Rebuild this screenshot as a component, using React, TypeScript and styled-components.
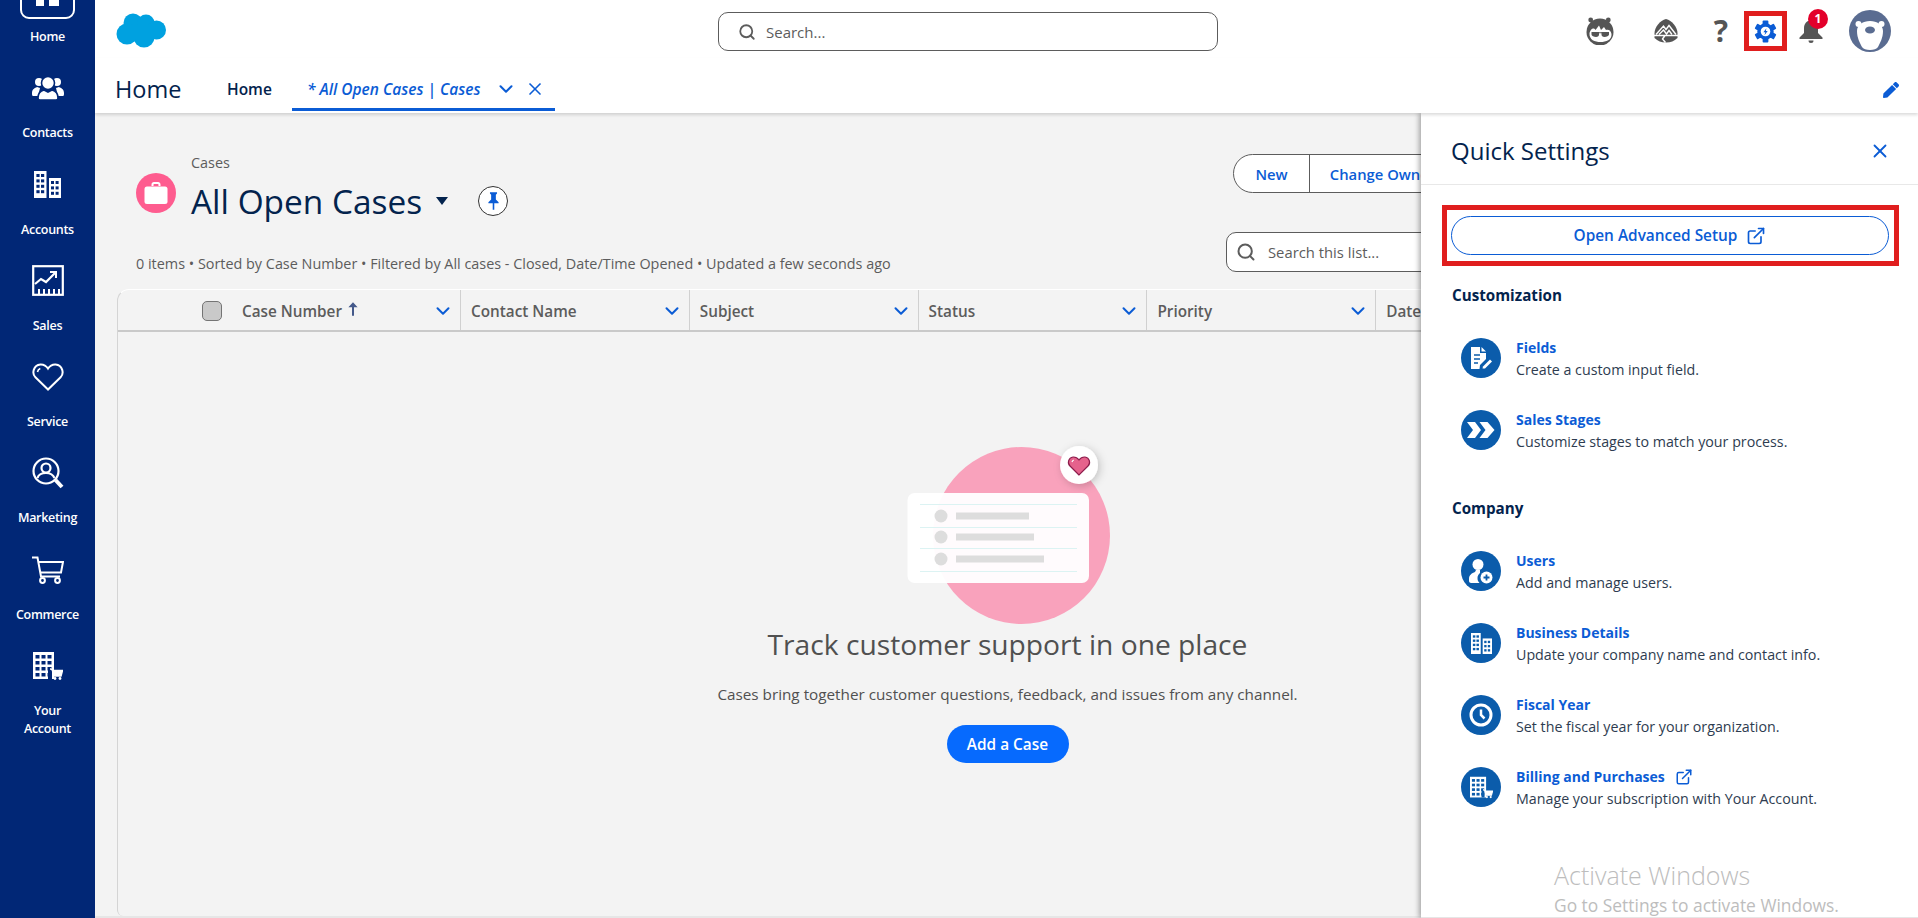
import * as React from 'react';
import styled, { createGlobalStyle } from 'styled-components';
import { ChevronDown, ExternalLink, Search, X } from 'lucide-react';
import { FaPen } from 'react-icons/fa';

const NAVY = '#012776';
const BLUE = '#0b5cd5';
const INK = '#03234d';
const CIRCLE = '#0b5cab';

const GlobalStyle = createGlobalStyle`
    html, body {
        margin: 0;
        padding: 0;
        height: 100%;
        overflow: hidden;
        background: #f3f3f3;
        font-family: "Open Sans", "Noto Sans", "Liberation Sans", sans-serif;
    }
    * {
        box-sizing: border-box;
    }
`;

const Page = styled.div`
    display: flex;
    width: 1918px;
    height: 918px;
    overflow: hidden;
`;

const Sidebar = styled.nav`
    flex: 0 0 95px;
    background: ${NAVY};
    overflow: hidden;
`;

const NavItem = styled.div<{ $first?: boolean }>`
    height: 96.25px;
    margin-top: ${(p) => (p.$first ? '-32px' : '0')};
    padding-top: 6px;
    display: flex;
    flex-direction: column;
    align-items: center;
    color: #fff;
`;

const NavIcon = styled.div`
    height: 36px;
    display: flex;
    align-items: center;
    justify-content: center;
`;

const HomeBox = styled.div`
    width: 55px;
    height: 54px;
    flex: none;
    border: 2px solid #fff;
    border-radius: 9px;
    display: flex;
    align-items: flex-end;
    justify-content: center;
    padding-bottom: 11px;
    gap: 5px;
`;

const HomeLeg = styled.span<{ $w: number }>`
    width: ${(p) => p.$w}px;
    height: 22px;
    background: #fff;
`;

const NavLabel = styled.div`
    margin-top: 18px;
    font-size: 12.5px;
    font-weight: 600;
    line-height: 18px;
    letter-spacing: -0.3px;
    text-align: center;
`;

const Main = styled.div`
    flex: 1;
    min-width: 0;
    display: flex;
    flex-direction: column;
    position: relative;
`;

const TopBar = styled.header`
    height: 58px;
    flex: none;
    background: #fff;
    display: flex;
    align-items: flex-start;
    padding-left: 21px;
`;

const Logo = styled.svg`
    width: 50px;
    height: 35px;
    margin-top: 13px;
    flex: none;
`;

const GlobalSearch = styled.div`
    width: 500px;
    height: 39px;
    margin: 12px 0 0 552px;
    border: 1px solid #5c5c5c;
    border-radius: 10px;
    background: #fff;
    display: flex;
    align-items: center;
    gap: 10px;
    padding: 1px 0 0 19px;
    color: #5c5c5c;
    font-size: 15px;
`;

const HeaderIcons = styled.div`
    margin-left: auto;
    padding-right: 13px;
    display: flex;
    height: 62px;
`;

const IconSlot = styled.div<{ $w: number; $mark?: boolean }>`
    width: ${(p) => p.$w}px;
    height: ${(p) => (p.$mark ? '40px' : '62px')};
    margin: ${(p) => (p.$mark ? '11px 0 0 4px' : '0')};
    border: ${(p) => (p.$mark ? '5px solid #e01e1e' : '0')};
    display: flex;
    align-items: center;
    justify-content: center;
    position: relative;
`;

const HelpMark = styled.span`
    font-family: "Open Sans", sans-serif;
    font-size: 30px;
    font-weight: 700;
    line-height: 1;
    color: #555;
`;

const Badge = styled.span`
    position: absolute;
    left: 21px;
    top: 9px;
    width: 20px;
    height: 20px;
    border-radius: 50%;
    background: #e3002b;
    color: #fff;
    font-size: 12px;
    font-weight: 700;
    line-height: 20px;
    text-align: center;
`;

const TabBar = styled.div`
    height: 55px;
    flex: none;
    background: #fff;
    display: flex;
    align-items: stretch;
    padding-left: 20px;
    box-shadow: 0 2px 3px rgba(0, 0, 0, 0.14);
    position: relative;
    z-index: 2;
`;

const AppName = styled.div`
    align-self: center;
    width: 112px;
    margin-top: 7px;
    font-size: 23.5px;
    color: ${INK};
    line-height: 32px;
`;

const PlainTab = styled.div`
    align-self: center;
    margin-top: 7px;
    width: 65px;
    font-size: 15.5px;
    font-weight: 600;
    color: ${INK};
`;

const ActiveTab = styled.div`
    width: 263px;
    height: 53px;
    border-bottom: 3px solid ${BLUE};
    display: flex;
    align-items: center;
    padding: 12px 0 0 15px;
    color: ${BLUE};
    font-size: 15.5px;
    font-weight: 600;
    font-style: italic;
    white-space: nowrap;
`;

const TabText = styled.span`
    width: 176px;
`;

const TabCaret = styled(ChevronDown)`
    width: 22px;
    height: 22px;
    margin-left: 12px;
    flex: none;
    stroke-width: 2.2;
`;

const TabClose = styled(X)`
    width: 20px;
    height: 20px;
    margin-left: 8px;
    flex: none;
    stroke-width: 2;
`;

const EditPen = styled(FaPen)`
    margin: 24px 19px 0 auto;
    width: 16px;
    height: 16px;
    color: ${BLUE};
`;

const Content = styled.main`
    flex: 1;
    min-height: 0;
    display: flex;
    flex-direction: column;
    background: #f3f3f3;
    border-bottom: 2px solid #e6e6e6;
`;

const ListHeader = styled.section`
    height: 176px;
    flex: none;
    display: grid;
    grid-template-columns: 1090px auto;
    padding-left: 41px;
`;

const ListInfo = styled.div`
    padding-top: 40px;
`;

const TitleBlock = styled.div`
    display: flex;
    gap: 15px;
`;

const CaseBadge = styled.div`
    width: 40px;
    height: 40px;
    margin-top: 20px;
    border-radius: 50%;
    background: #fe5c8f;
    display: flex;
    align-items: center;
    justify-content: center;
`;

const ObjectName = styled.div`
    font-size: 14.4px;
    line-height: 20px;
    color: #5c5c5c;
`;

const TitleRow = styled.div`
    margin-top: 6px;
    height: 44px;
    display: flex;
    align-items: center;
`;

const ListTitle = styled.h1`
    margin: 0;
    font-size: 33.4px;
    font-weight: 400;
    line-height: 44px;
    color: ${INK};
`;

const Caret = styled.span`
    margin-left: 14px;
    width: 0;
    height: 0;
    border-left: 6.5px solid transparent;
    border-right: 6.5px solid transparent;
    border-top: 8px solid ${INK};
`;

const PinButton = styled.div`
    margin-left: 30px;
    width: 30px;
    height: 30px;
    border: 1px solid #333;
    border-radius: 50%;
    background: #fff;
    display: flex;
    align-items: center;
    justify-content: center;
`;

const ListMeta = styled.div`
    margin-top: 31px;
    font-size: 14.4px;
    line-height: 20px;
    color: #5c5c5c;
    white-space: nowrap;
`;

const ListTools = styled.div`
    padding-top: 41px;
    white-space: nowrap;
`;

const ButtonGroup = styled.div`
    display: inline-flex;
    margin-left: 7px;
    height: 39px;
    background: #fff;
    border: 1px solid #5c5c5c;
    border-radius: 20px;
    color: ${BLUE};
    font-size: 14.8px;
    font-weight: 600;
    align-items: center;
`;

const GroupButton = styled.div<{ $w: number; $divided?: boolean }>`
    width: ${(p) => p.$w}px;
    height: 100%;
    display: flex;
    align-items: center;
    justify-content: center;
    border-left: ${(p) => (p.$divided ? '1px solid #5c5c5c' : '0')};
`;

const ListSearch = styled.div`
    margin-top: 39px;
    width: 300px;
    height: 40px;
    border: 1px solid #5c5c5c;
    border-radius: 10px;
    background: #fff;
    display: flex;
    align-items: center;
    gap: 12px;
    padding-left: 9px;
    color: #5c5c5c;
    font-size: 14.8px;
`;

const Table = styled.section`
    flex: 1;
    min-height: 0;
    margin: 0 21px 0 22px;
    display: flex;
    flex-direction: column;
    border-left: 1px solid #d4d4d4;
    border-top: 1px solid #fff;
    border-top-left-radius: 12px;
    border-bottom-left-radius: 6px;
`;

const HeaderRow = styled.div`
    height: 42px;
    flex: none;
    display: flex;
    border-bottom: 2px solid #c9c9c9;
`;

const Column = styled.div<{ $w: number }>`
    width: ${(p) => p.$w}px;
    flex: none;
    display: flex;
    align-items: center;
    padding: 1px 6px 0 10px;
    border-left: 1px solid #d0d0d0;
    color: #5c5c5c;
    font-size: 15.3px;
    font-weight: 600;
    white-space: nowrap;
`;

const FirstColumn = styled.div`
    width: 342px;
    flex: none;
    display: flex;
    align-items: center;
    padding: 1px 6px 0 84px;
    color: #5c5c5c;
    font-size: 15.3px;
    font-weight: 600;
`;

const CheckBox = styled.span`
    width: 20px;
    height: 20px;
    margin-right: 20px;
    border: 1px solid #747474;
    border-radius: 5px;
    background: #c9c9c9;
`;

const SortArrow = styled.svg`
    margin: -4px 0 0 6px;
`;

const ColumnCaret = styled(ChevronDown)`
    margin-left: auto;
    width: 22px;
    height: 22px;
    flex: none;
    color: ${BLUE};
    stroke-width: 2.2;
`;

const EmptyState = styled.div`
    flex: 1;
    display: flex;
    flex-direction: column;
    align-items: center;
    padding-top: 114px;
`;

const EmptyArt = styled.svg`
    width: 204px;
    height: 178px;
    overflow: visible;
`;

const EmptyTitle = styled.h2`
    margin: 2px 0 0;
    font-size: 28.2px;
    font-weight: 400;
    line-height: 36px;
    color: #505050;
`;

const EmptyText = styled.p`
    margin: 22px 0 0;
    font-size: 15.27px;
    line-height: 20px;
    color: #505050;
`;

const PrimaryButton = styled.div`
    margin-top: 21px;
    width: 122px;
    height: 38px;
    border-radius: 19px;
    background: #066afe;
    color: #fff;
    font-size: 15.4px;
    font-weight: 600;
    display: flex;
    align-items: center;
    justify-content: center;
`;

const SettingsPanel = styled.aside`
    position: absolute;
    left: 1326px;
    right: 0;
    top: 113px;
    bottom: 0;
    background: #fff;
    box-shadow: -2px 0 5px rgba(0, 0, 0, 0.32);
    border-bottom: 1px solid #e6e6e6;
    z-index: 1;
`;

const PanelHeader = styled.div`
    height: 72px;
    border-bottom: 1px solid #e8e8e8;
    display: flex;
    align-items: center;
    justify-content: space-between;
    padding: 4px 27px 0 30px;
    color: ${INK};
`;

const PanelTitle = styled.h2`
    margin: 0;
    font-size: 24px;
    font-weight: 400;
`;

const PanelClose = styled(X)`
    width: 22px;
    height: 22px;
    color: ${BLUE};
`;

const SetupHighlight = styled.div`
    margin: 20px 19px 0 21px;
    border: 5px solid #e01e1e;
    padding: 6px 5px 6px 4px;
`;

const SetupButton = styled.div`
    height: 39px;
    border: 1px solid ${BLUE};
    border-radius: 20px;
    color: ${BLUE};
    font-size: 15.4px;
    font-weight: 600;
    display: flex;
    align-items: center;
    justify-content: center;
    gap: 9px;
`;

const SectionTitle = styled.h3<{ $top: number }>`
    margin: ${(p) => p.$top}px 0 0 31px;
    font-size: 15.2px;
    font-weight: 700;
    line-height: 20px;
    color: ${INK};
`;

const SettingList = styled.div`
    margin: 33px 0 0 40px;
    display: flex;
    flex-direction: column;
    gap: 32px;
`;

const SettingRow = styled.div`
    display: flex;
    gap: 15px;
    height: 40px;
`;

const SettingIcon = styled.div`
    width: 40px;
    height: 40px;
    flex: none;
    border-radius: 50%;
    background: ${CIRCLE};
    display: flex;
    align-items: center;
    justify-content: center;
`;

const SettingName = styled.div`
    display: flex;
    align-items: center;
    gap: 10px;
    font-size: 14px;
    font-weight: 700;
    line-height: 20px;
    color: ${BLUE};
`;

const SettingText = styled.div`
    margin-top: 2px;
    font-size: 14.25px;
    line-height: 20px;
    color: #2e3c50;
    white-space: nowrap;
`;

const Watermark = styled.div`
    position: absolute;
    left: 133px;
    top: 745px;
    color: #bdbdbd;
    white-space: nowrap;
    font-family: "Open Sans", sans-serif;
`;

const WatermarkTitle = styled.div`
    font-size: 25px;
    font-weight: 300;
    line-height: 34px;
`;

const WatermarkText = styled.div`
    font-size: 17.4px;
    line-height: 26px;
`;

function ContactsIcon() {
    return (
        <svg width="32" height="24" viewBox="0 0 32 24" fill="#fff">
            <circle cx="7" cy="6" r="4" />
            <circle cx="25" cy="6" r="4" />
            <path d="M0 17c0-4 3-5 5-6l3 1-2 8H1c-1 0-1-2-1-3zM32 17c0-4-3-5-5-6l-3 1 2 8h5c1 0 1-2 1-3z" />
            <circle cx="16" cy="7" r="6.5" stroke={NAVY} strokeWidth="1.6" />
            <path d="M6 22c0-5 2-7 6-8l4 2 4-2c4 1 6 3 6 8 0 1-1 2-2 2H8c-1 0-2-1-2-2z" stroke={NAVY} strokeWidth="1.6" />
        </svg>
    );
}

function Buildings({ size, back }: { size: number; back: string }) {
    const rows = [0, 1, 2, 3];
    return (
        <svg width={size} height={size} viewBox="0 0 27 27">
            <rect x="0" y="0" width="12.5" height="27" fill="#fff" />
            <rect x="15" y="7" width="12" height="20" fill="#fff" />
            {rows.map((r) => (
                <g key={r} fill={back}>
                    <rect x="2.4" y={3 + r * 5.4} width="3.2" height="3" />
                    <rect x="7" y={3 + r * 5.4} width="3.2" height="3" />
                </g>
            ))}
            {[0, 1, 2].map((r) => (
                <g key={r} fill={back}>
                    <rect x="17" y={10 + r * 5.4} width="3" height="3" />
                    <rect x="21.6" y={10 + r * 5.4} width="3" height="3" />
                </g>
            ))}
        </svg>
    );
}

function SalesIcon() {
    return (
        <svg width="32" height="31" viewBox="0 0 32 31" fill="none" stroke="#fff">
            <rect x="1.2" y="1.2" width="29.6" height="28.6" strokeWidth="2.2" />
            <path d="M3 19l6-5 5 3 9-9" strokeWidth="2.2" />
            <path d="M18 7h6v6" strokeWidth="2" />
            <path d="M7 29v-5M12 29v-5M17 29v-5M22 29v-5M27 29v-5" strokeWidth="2" />
        </svg>
    );
}

function HeartIcon() {
    return (
        <svg width="32" height="28" viewBox="0 0 32 28" fill="none" stroke="#fff" strokeWidth="2">
            <path d="M16 26.5 3.4 14.2C-.4 10.4 1.4 2 8.4 1.4c3.4-.2 6 1.6 7.6 4.2C17.6 3 20.2 1.2 23.6 1.4c7 .6 8.8 9 5 12.8z" />
            <path d="M5.5 9c.3-1.7 1.2-2.8 2.8-3.4" strokeWidth="1.6" />
        </svg>
    );
}

function MarketingIcon() {
    return (
        <svg width="32" height="32" viewBox="0 0 32 32" fill="none" stroke="#fff" strokeWidth="2.2">
            <circle cx="14" cy="14" r="12.5" />
            <circle cx="14" cy="11" r="4.5" />
            <path d="M5.5 21c1-3.5 4-5 8.5-5s7 1.5 8.5 5" />
            <path d="m23.5 23 6.5 7" strokeWidth="4" />
        </svg>
    );
}

function CartIcon() {
    return (
        <svg width="32" height="28" viewBox="0 0 32 28" fill="none" stroke="#fff" strokeWidth="2">
            <path d="M0 1.5h5.5l3.5 19h19" />
            <path d="M7 6h24l-2 10.5H9" />
            <circle cx="10.5" cy="24.5" r="2.4" />
            <circle cx="25.5" cy="24.5" r="2.4" />
        </svg>
    );
}

function BuildingCart({ size, back }: { size: number; back: string }) {
    const cols = [0, 1, 2];
    const rows = [0, 1, 2, 3];
    return (
        <svg width={size} height={size} viewBox="0 0 30 28">
            <rect x="0" y="0" width="21" height="27" fill="#fff" />
            {rows.map((r) =>
                cols.map((c) => <rect key={`${r}${c}`} x={2.5 + c * 6} y={3 + r * 6} width="4" height="3.5" fill={back} />),
            )}
            <path d="M15 16h4v11h-4z" fill={back} />
            <path d="M17 17h2l2 7h7l1.5-5.5H19" stroke="#fff" strokeWidth="1.5" fill="#fff" />
            <circle cx="22" cy="26.5" r="1.4" fill="#fff" />
            <circle cx="27" cy="26.5" r="1.4" fill="#fff" />
        </svg>
    );
}

function GoggleFace() {
    return (
        <svg width="29" height="28" viewBox="0 0 29 28">
            <circle cx="4.7" cy="3" r="2.4" fill="#555" />
            <circle cx="22.3" cy="3" r="2.4" fill="#555" />
            <circle cx="14" cy="15" r="13.5" fill="#555" />
            <path d="M3.5 16C4.500 12 7.500 10 9.500 13L13 8.500 15 13l3-3 2 3c2-1 5 0 5.500 4 .5 6-5.500 8-11 8S3 23 3.500 16z" fill="#fff" />
            <path d="M5.500 15h7.500v2.500c0 1.500-1 2.500-3 2.500s-4.500-1-4.500-2.500zM15.500 15h7.500v2.500c0 1.500-2.500 2.500-4.500 2.500s-3-1-3-2.500zM13 15.200h3v1h-3z" fill="#555" />
        </svg>
    );
}

function PeakIcon() {
    return (
        <svg width="24" height="24" viewBox="0 0 24 24">
            <path d="M12 0c6 1.500 11.500 8 11.500 14.500v4.500C20 22 17 23.500 12 23.500S4 22 .5 19v-4.500C.5 8 6 1.500 12 0z" fill="#555" />
            <path d="M2 15.500 9.500 7l2.500 3.500L15 6.500l7 9M5 15.500l4.500-4.500 3 4 2.500-3.500 3 4" fill="none" stroke="#fff" strokeWidth="1.4" />
            <path d="M0 16.500h24M11 16.500 8.500 20l3 3.500" fill="none" stroke="#fff" strokeWidth="1.4" />
        </svg>
    );
}

function GearIcon() {
    const teeth = [0, 60, 120, 180, 240, 300];
    return (
        <svg width="23" height="23" viewBox="0 0 24 24">
            {teeth.map((a) => (
                <rect key={a} x="9" y="0.5" width="6" height="6" rx="1" fill={BLUE} transform={`rotate(${a} 12 12)`} />
            ))}
            <circle cx="12" cy="12" r="8.5" fill={BLUE} />
            <circle cx="12" cy="12" r="5" fill="#fff" />
            <path d="M13 8.500 9.800 12.800h2l-.9 3 3.400-4.400h-2z" fill={BLUE} />
        </svg>
    );
}

function BellIcon() {
    return (
        <svg width="24" height="24" viewBox="0 0 24 24" fill="#555">
            <path d="M12 1.500c-4.500 0-7 3.500-7 8v4.500L.5 18.500v1.500h23v-1.500L19 14V9.500c0-4.500-2.500-8-7-8z" />
            <path d="M9.500 21.500a2.500 2.500 0 0 0 5 0z" />
        </svg>
    );
}

function BearAvatar() {
    return (
        <svg width="42" height="42" viewBox="0 0 42 42">
            <circle cx="21" cy="21" r="21" fill="#5a6c91" />
            <g fill="#fff">
                <circle cx="9.5" cy="14" r="3" />
                <circle cx="32.5" cy="14" r="3" />
                <path d="M21 11c7 0 13 4 13 10 0 7-3 12-5 16-2 4-14 4-16 0-2-4-5-9-5-16 0-6 6-10 13-10z" />
            </g>
            <ellipse cx="21" cy="20" rx="5" ry="3.5" fill="#5a6c91" />
        </svg>
    );
}

function CloudLogo() {
    return (
        <Logo viewBox="0 0 50 35" fill="#00a1e0">
            <circle cx="17" cy="10" r="9.5" />
            <circle cx="30" cy="10" r="8.5" />
            <circle cx="40.5" cy="17" r="9.5" />
            <circle cx="28" cy="24" r="10.5" />
            <circle cx="11" cy="21" r="10.5" />
            <rect x="12" y="12" width="25" height="14" />
        </Logo>
    );
}

function BriefcaseIcon() {
    return (
        <svg width="24" height="24" viewBox="0 0 24 24" fill="#fff">
            <rect x="0.5" y="5.5" width="23" height="17.5" rx="2.5" />
            <path d="M7.500 5V3.500C7.500 2 8.500 1 10 1h4c1.500 0 2.500 1 2.500 2.500V5h-2V3.500c0-.4-.2-.6-.6-.6h-3.800c-.4 0-.6.2-.6.6V5z" />
        </svg>
    );
}

function PinIcon() {
    return (
        <svg width="11" height="18" viewBox="0 0 14 22" fill={BLUE}>
            <path d="M2.500 0h9v1.500L10 3v6l3.500 3.500V14H8v8H6v-8H.5v-1.500L4 9V3L2.500 1.500z" />
        </svg>
    );
}

function EmptyIllustration() {
    const rows = [
        { y: 70, w: 73 },
        { y: 91, w: 78 },
        { y: 113, w: 88 },
    ];
    return (
        <EmptyArt viewBox="0 0 204 178">
            <defs>
                <filter id="badge-shadow" x="-40%" y="-40%" width="180%" height="180%">
                    <feDropShadow dx="2" dy="2" stdDeviation="4" floodColor="#000" floodOpacity="0.2" />
                </filter>
            </defs>
            <circle cx="115.5" cy="89.5" r="88.5" fill="#f9a2bc" />
            <rect x="1.5" y="47" width="181.5" height="90" rx="7" fill="#fff" fillOpacity="0.96" />
            {[58, 81, 102, 125].map((y) => (
                <rect key={y} x="14" y={y} width="157" height="1" fill="#dcf3f3" />
            ))}
            {rows.map((r) => (
                <g key={r.y} fill="#dddddd">
                    <circle cx="35" cy={r.y} r="6.5" />
                    <rect x="50" y={r.y - 3.5} width={r.w} height="7" />
                </g>
            ))}
            <circle cx="173" cy="19" r="19" fill="#fff" filter="url(#badge-shadow)" />
            <path d="M173 29 164 20c-3-3-1.500-8.500 3-9 2.500-.2 4.500 1 6 3 1.500-2 3.500-3.200 6-3 4.500.5 6 6 3 9z" fill="#e5628c" stroke="#8d1d4c" strokeWidth="1.2" />
            <path d="M166 16c.3-1 .8-1.600 1.800-2" fill="none" stroke="#fff" strokeWidth="1.2" />
        </EmptyArt>
    );
}

function DocEditIcon() {
    return (
        <svg width="24" height="24" viewBox="0 0 24 24" fill="#fff">
            <path d="M2 1h9v6h6v6l-6 6-.5 4H2z" />
            <path d="M12.500 1 17 5.500h-4.500z" />
            <path d="M5 9h6M5 13h6M5 17h4" stroke={CIRCLE} strokeWidth="1.6" />
            <path d="M14 20.500 21 13.500l2 2-7 7h-2.500z" />
        </svg>
    );
}

function StagesIcon() {
    return (
        <svg width="28" height="20" viewBox="0 0 28 20" fill="#fff">
            <path d="M0 2h8l6 8-6 8H0l6-8z" />
            <path d="M12.500 2h8l7 8-7 8h-8l6-8z" />
        </svg>
    );
}

function UserPlusIcon() {
    return (
        <svg width="24" height="26" viewBox="0 0 24 26">
            <circle cx="9" cy="6.5" r="5.5" fill="#fff" />
            <path d="M0 21c0-4 3-6 6-7l1-2h4v3c-1.500 1-2.500 3-2.500 5s.5 3.500 2 5H2c-1 0-2-1-2-2z" fill="#fff" />
            <circle cx="17.5" cy="19.5" r="6" fill="#fff" />
            <path d="M14.500 19.500h6M17.500 16.500v6" stroke={CIRCLE} strokeWidth="1.8" />
        </svg>
    );
}

function ClockIcon() {
    return (
        <svg width="24" height="24" viewBox="0 0 24 24" fill="none" stroke="#fff">
            <circle cx="12" cy="12" r="10" strokeWidth="3" />
            <path d="M12 6.500V12l3.500 3.500" strokeWidth="2.5" />
        </svg>
    );
}

const columns = ['Contact Name', 'Subject', 'Status', 'Priority', 'Date/Time Opened'];

const customization = [
    { name: 'Fields', text: 'Create a custom input field.', icon: <DocEditIcon /> },
    { name: 'Sales Stages', text: 'Customize stages to match your process.', icon: <StagesIcon /> },
];

const company = [
    { name: 'Users', text: 'Add and manage users.', icon: <UserPlusIcon /> },
    { name: 'Business Details', text: 'Update your company name and contact info.', icon: <Buildings size={21} back={CIRCLE} /> },
    { name: 'Fiscal Year', text: 'Set the fiscal year for your organization.', icon: <ClockIcon /> },
    { name: 'Billing and Purchases', text: 'Manage your subscription with Your Account.', icon: <BuildingCart size={23} back={CIRCLE} />, external: true },
];

function Setting(props: { name: string; text: string; icon: React.ReactNode; external?: boolean }) {
    return (
        <SettingRow>
            <SettingIcon>{props.icon}</SettingIcon>
            <div>
                <SettingName>
                    {props.name}
                    {props.external && <ExternalLink size={18} strokeWidth={2} />}
                </SettingName>
                <SettingText>{props.text}</SettingText>
            </div>
        </SettingRow>
    );
}

export default function App() {
    return (
        <Page>
            <GlobalStyle />
            <Sidebar>
                <NavItem $first>
                    <NavIcon>
                        <HomeBox>
                            <HomeLeg $w={8} />
                            <HomeLeg $w={10} />
                        </HomeBox>
                    </NavIcon>
                    <NavLabel>Home</NavLabel>
                </NavItem>
                <NavItem>
                    <NavIcon><ContactsIcon /></NavIcon>
                    <NavLabel>Contacts</NavLabel>
                </NavItem>
                <NavItem>
                    <NavIcon><Buildings size={27} back={NAVY} /></NavIcon>
                    <NavLabel>Accounts</NavLabel>
                </NavItem>
                <NavItem>
                    <NavIcon><SalesIcon /></NavIcon>
                    <NavLabel>Sales</NavLabel>
                </NavItem>
                <NavItem>
                    <NavIcon><HeartIcon /></NavIcon>
                    <NavLabel>Service</NavLabel>
                </NavItem>
                <NavItem>
                    <NavIcon><MarketingIcon /></NavIcon>
                    <NavLabel>Marketing</NavLabel>
                </NavItem>
                <NavItem>
                    <NavIcon><CartIcon /></NavIcon>
                    <NavLabel>Commerce</NavLabel>
                </NavItem>
                <NavItem>
                    <NavIcon><BuildingCart size={30} back={NAVY} /></NavIcon>
                    <NavLabel>Your<br />Account</NavLabel>
                </NavItem>
            </Sidebar>
            <Main>
                <TopBar>
                    <CloudLogo />
                    <GlobalSearch>
                        <Search size={18} strokeWidth={2.4} />
                        <span>Search...</span>
                    </GlobalSearch>
                    <HeaderIcons>
                        <IconSlot $w={60}><GoggleFace /></IconSlot>
                        <IconSlot $w={72}><PeakIcon /></IconSlot>
                        <IconSlot $w={38}><HelpMark>?</HelpMark></IconSlot>
                        <IconSlot $w={43} $mark><GearIcon /></IconSlot>
                        <IconSlot $w={48}>
                            <BellIcon />
                            <Badge>1</Badge>
                        </IconSlot>
                        <IconSlot $w={70}><BearAvatar /></IconSlot>
                    </HeaderIcons>
                </TopBar>
                <TabBar>
                    <AppName>Home</AppName>
                    <PlainTab>Home</PlainTab>
                    <ActiveTab>
                        <TabText>* All Open Cases | Cases</TabText>
                        <TabCaret />
                        <TabClose />
                    </ActiveTab>
                    <EditPen />
                </TabBar>
                <Content>
                    <ListHeader>
                        <ListInfo>
                            <TitleBlock>
                                <CaseBadge><BriefcaseIcon /></CaseBadge>
                                <div>
                                    <ObjectName>Cases</ObjectName>
                                    <TitleRow>
                                        <ListTitle>All Open Cases</ListTitle>
                                        <Caret />
                                        <PinButton><PinIcon /></PinButton>
                                    </TitleRow>
                                </div>
                            </TitleBlock>
                            <ListMeta>
                                0 items • Sorted by Case Number • Filtered by All cases - Closed, Date/Time Opened • Updated a few seconds ago
                            </ListMeta>
                        </ListInfo>
                        <ListTools>
                            <ButtonGroup>
                                <GroupButton $w={75}>New</GroupButton>
                                <GroupButton $w={146} $divided>Change Owner</GroupButton>
                            </ButtonGroup>
                            <ListSearch>
                                <Search size={20} strokeWidth={2.4} />
                                <span>Search this list...</span>
                            </ListSearch>
                        </ListTools>
                    </ListHeader>
                    <Table>
                        <HeaderRow>
                            <FirstColumn>
                                <CheckBox />
                                Case Number
                                <SortArrow width="10" height="14" viewBox="0 0 12 16" fill="#44598a">
                                    <path d="M6 0 11.500 6H7.200v10H4.800V6H.5z" />
                                </SortArrow>
                                <ColumnCaret />
                            </FirstColumn>
                            {columns.map((name) => (
                                <Column key={name} $w={228.8}>
                                    {name}
                                    <ColumnCaret />
                                </Column>
                            ))}
                        </HeaderRow>
                        <EmptyState>
                            <EmptyIllustration />
                            <EmptyTitle>Track customer support in one place</EmptyTitle>
                            <EmptyText>Cases bring together customer questions, feedback, and issues from any channel.</EmptyText>
                            <PrimaryButton>Add a Case</PrimaryButton>
                        </EmptyState>
                    </Table>
                </Content>
                <SettingsPanel>
                    <PanelHeader>
                        <PanelTitle>Quick Settings</PanelTitle>
                        <PanelClose />
                    </PanelHeader>
                    <SetupHighlight>
                        <SetupButton>
                            Open Advanced Setup
                            <ExternalLink size={20} strokeWidth={2} />
                        </SetupButton>
                    </SetupHighlight>
                    <SectionTitle $top={19}>Customization</SectionTitle>
                    <SettingList>
                        {customization.map((s) => <Setting key={s.name} {...s} />)}
                    </SettingList>
                    <SectionTitle $top={48}>Company</SectionTitle>
                    <SettingList>
                        {company.map((s) => <Setting key={s.name} {...s} />)}
                    </SettingList>
                    <Watermark>
                        <WatermarkTitle>Activate Windows</WatermarkTitle>
                        <WatermarkText>Go to Settings to activate Windows.</WatermarkText>
                    </Watermark>
                </SettingsPanel>
            </Main>
        </Page>
    );
}
